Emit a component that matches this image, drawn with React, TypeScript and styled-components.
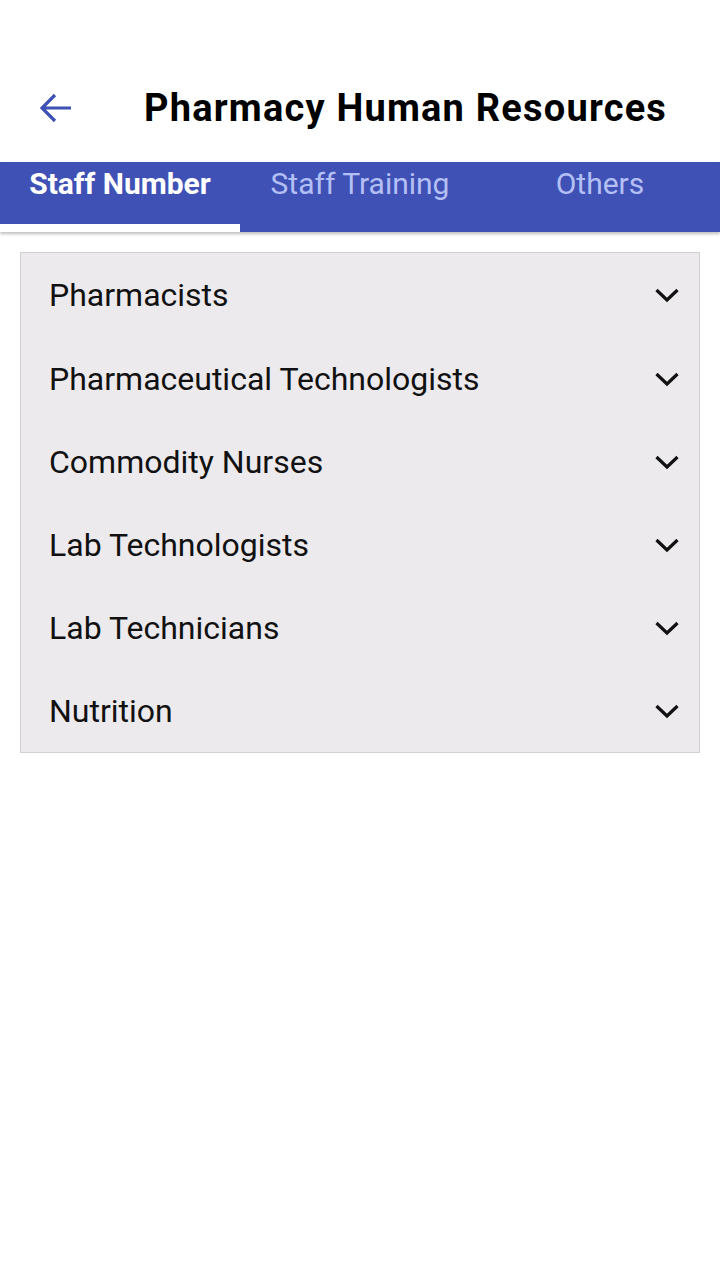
import React from "react";
import styled, { createGlobalStyle } from "styled-components";

const Global = createGlobalStyle`
  html, body { margin: 0; padding: 0; background: #fff; }
  body { font-family: Roboto, "Noto Sans", sans-serif; }
`;

const Page = styled.div`
  width: 720px;
  min-height: 1280px;
  background: #fff;
  display: flex;
  flex-direction: column;
`;

const Header = styled.header`
  height: 162px;
  display: flex;
  align-items: center;
  padding: 54px 0 0 38px;
  box-sizing: border-box;
`;

const BackButton = styled.button`
  width: 36px;
  height: 36px;
  border: 0;
  background: none;
  padding: 0;
  display: flex;
  align-items: center;
  justify-content: center;
  color: #3f51b5;
`;

const Title = styled.h1`
  margin: 0 0 0 70px;
  font-family: Roboto, sans-serif;
  font-weight: 700;
  font-size: 38px;
  color: #000;
  letter-spacing: 1.2px;
  line-height: 44px;
`;

const TabBar = styled.nav`
  height: 70px;
  background: #3f51b5;
  display: grid;
  grid-template-columns: repeat(3, 1fr);
  box-shadow: 0 2px 3px rgba(0, 0, 0, 0.25);
  position: relative;
  z-index: 1;
`;

const Tab = styled.div<{ $active?: boolean }>`
  position: relative;
  text-align: center;
  padding-top: 4px;
  font-size: 30px;
  line-height: 36px;
  font-weight: ${(p) => (p.$active ? 700 : 400)};
  color: ${(p) => (p.$active ? "#ffffff" : "#b4c0f5")};
  ${(p) =>
    p.$active &&
    `&::after {
      content: "";
      position: absolute;
      left: 0;
      right: 0;
      bottom: 0;
      height: 8px;
      background: #fff;
    }`}
`;

const Content = styled.main`
  padding: 20px 20px;
`;

const Panel = styled.section`
  background: #eceaed;
  border: 1px solid #d2d0d3;
  display: flex;
  flex-direction: column;
`;

const Row = styled.div`
  height: 83px;
  display: flex;
  align-items: center;
  justify-content: space-between;
  padding: 0 19px 0 28px;
  font-size: 32px;
  color: #111;
  &:first-child { height: 84px; }
`;

const Chevron = () => (
  <svg width="26" height="16" viewBox="0 0 26 16">
    <path d="M2.5 3 L13 13 L23.5 3" fill="none" stroke="#111" strokeWidth="3.2" />
  </svg>
);

const items = [
  "Pharmacists",
  "Pharmaceutical Technologists",
  "Commodity Nurses",
  "Lab Technologists",
  "Lab Technicians",
  "Nutrition",
];

export default function App() {
  return (
    <Page>
      <Global />
      <Header>
        <BackButton aria-label="back">
          <svg width="34" height="32" viewBox="0 0 34 32">
            <path
              d="M32 16 H4 M16 3 L3 16 L16 29"
              fill="none"
              stroke="#3f51b5"
              strokeWidth="3.2"
            />
          </svg>
        </BackButton>
        <Title>Pharmacy Human Resources</Title>
      </Header>
      <TabBar>
        <Tab $active>Staff Number</Tab>
        <Tab>Staff Training</Tab>
        <Tab>Others</Tab>
      </TabBar>
      <Content>
        <Panel>
          {items.map((t) => (
            <Row key={t}>
              <span>{t}</span>
              <Chevron />
            </Row>
          ))}
        </Panel>
      </Content>
    </Page>
  );
}
